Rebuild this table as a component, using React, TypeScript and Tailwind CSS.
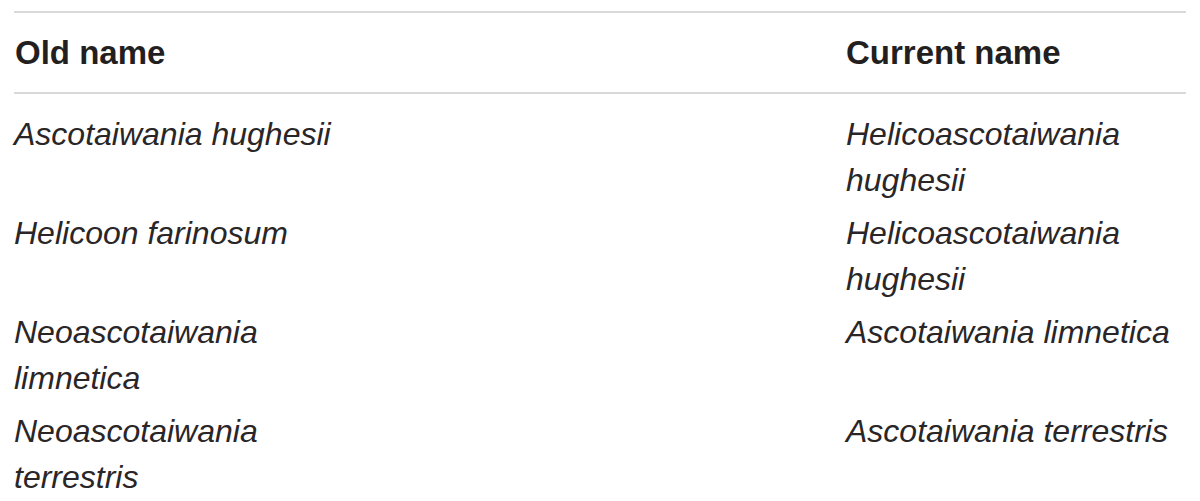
const rows = [
  ["Ascotaiwania hughesii", "Helicoascotaiwania hughesii"],
  ["Helicoon farinosum", "Helicoascotaiwania hughesii"],
  ["Neoascotaiwania limnetica", "Ascotaiwania limnetica"],
  ["Neoascotaiwania terrestris", "Ascotaiwania terrestris"],
]

export default function App() {
  return (
    <main className="h-[501px] w-[1200px] overflow-hidden bg-white pt-[11px] font-['Liberation_Sans',Arial,sans-serif] text-[#231f20]">
      <div className="mx-[14px] border-t-2 border-[#d9d9d9]">
        {/* Header */}
        <div className="grid grid-cols-[832px_340px] border-b-2 border-[#d9d9d9] pt-[20px] pb-[19px] text-[33px] font-bold leading-[40px]">
          <div className="pl-[1px]">Old name</div>
          <div>Current name</div>
        </div>

        {/* Rows */}
        <div className="pt-[14px]">
          {rows.map(([oldName, currentName]) => (
            <div
              key={oldName}
              className="grid grid-cols-[832px_340px] py-1 text-[32px] italic leading-[45.5px] text-[#2a2627]"
            >
              <div className="w-[345px]">{oldName}</div>
              <div>{currentName}</div>
            </div>
          ))}
        </div>
      </div>
    </main>
  )
}
